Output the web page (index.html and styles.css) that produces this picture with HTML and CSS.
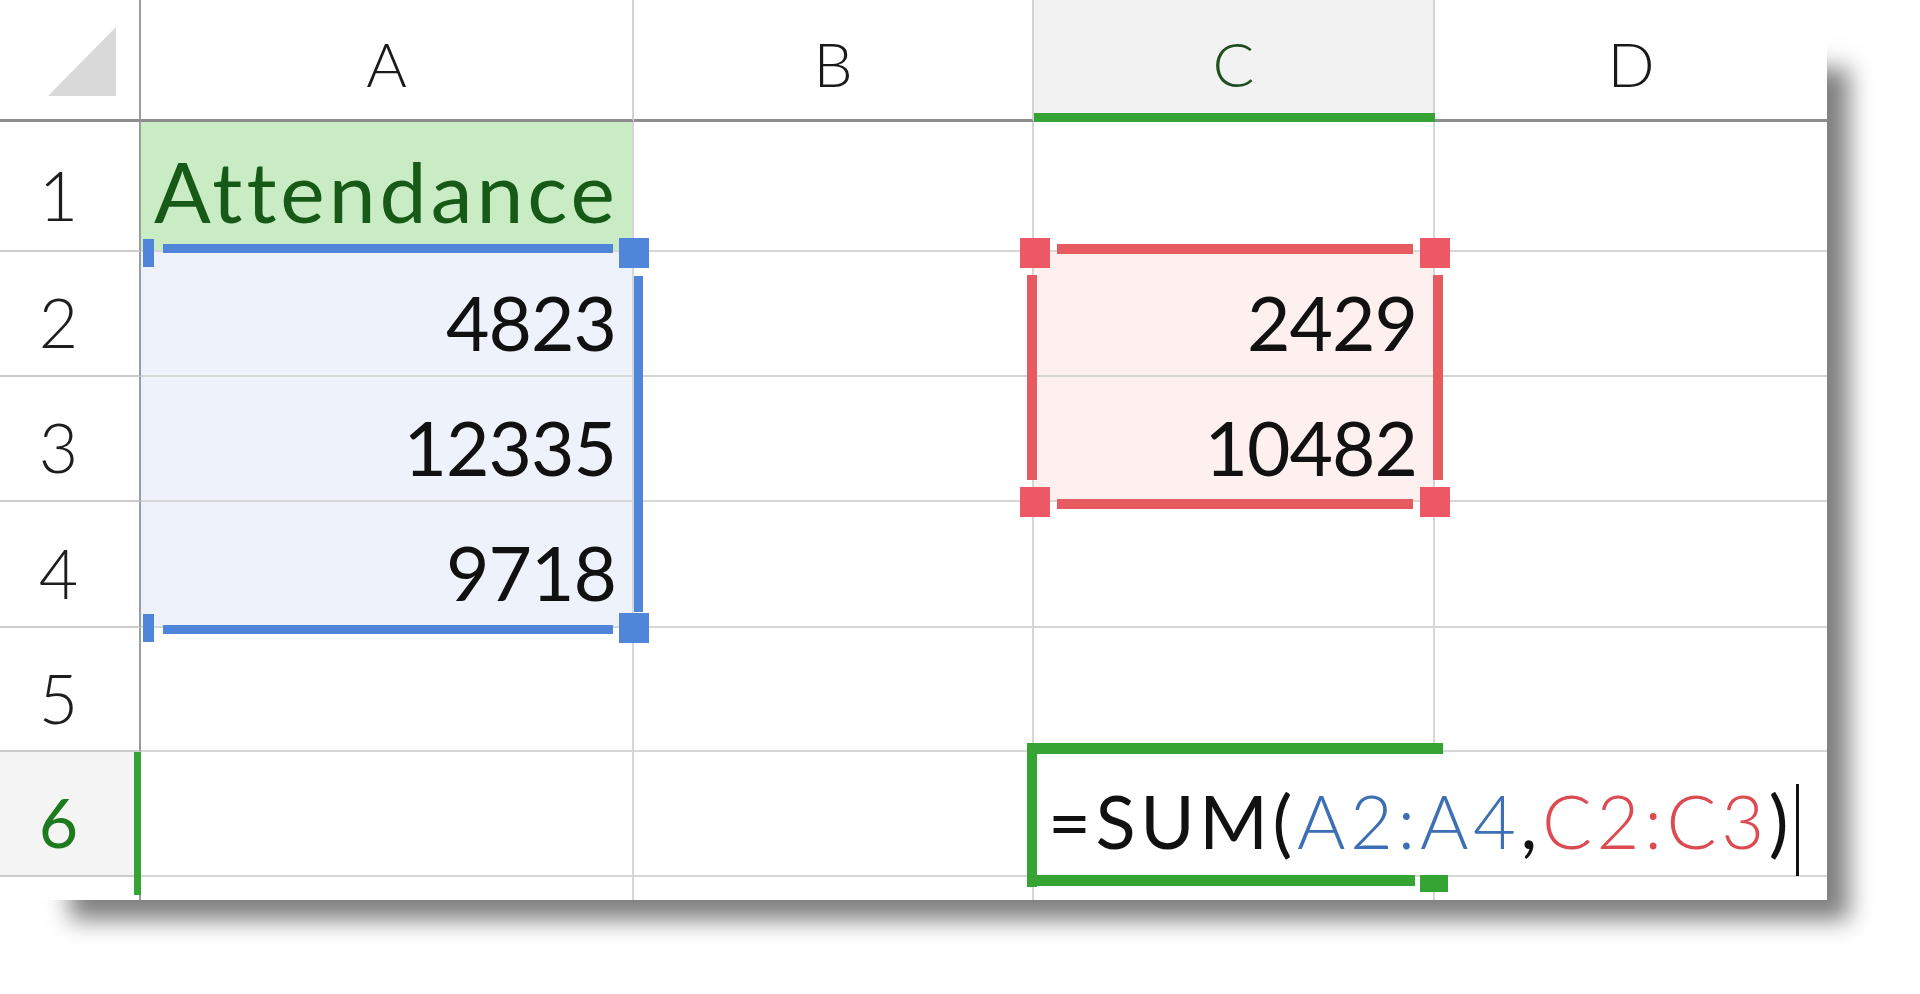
FILE: index.html
```html
<!DOCTYPE html>
<html lang="en">
<head>
<meta charset="utf-8">
<title>SUM formula</title>
<link rel="stylesheet" href="styles.css">
</head>
<body>
<div class="page">
  <div class="sheet">
    <div class="grid">
      <div class="corner">
        <svg class="corner-tri" width="68" height="69" viewBox="0 0 68 69"><polygon points="68,0 68,69 0,69" fill="#d9d9d9"/></svg>
      </div>
      <div class="colhead">A</div>
      <div class="colhead">B</div>
      <div class="colhead active">C</div>
      <div class="colhead last">D</div>

      <div class="rowhead">1</div>
      <div class="cell title">Attendance</div>
      <div class="cell"></div>
      <div class="cell"></div>
      <div class="cell last"></div>

      <div class="rowhead">2</div>
      <div class="cell num blue">4823</div>
      <div class="cell"></div>
      <div class="cell num red">2429</div>
      <div class="cell last"></div>

      <div class="rowhead">3</div>
      <div class="cell num blue">12335</div>
      <div class="cell"></div>
      <div class="cell num red">10482</div>
      <div class="cell last"></div>

      <div class="rowhead">4</div>
      <div class="cell num blue">9718</div>
      <div class="cell"></div>
      <div class="cell"></div>
      <div class="cell last"></div>

      <div class="rowhead">5</div>
      <div class="cell"></div>
      <div class="cell"></div>
      <div class="cell"></div>
      <div class="cell last"></div>

      <div class="rowhead active-row">6</div>
      <div class="cell"></div>
      <div class="cell"></div>
      <div class="cell edit"><span class="f-black">=SUM(</span><span class="f-blue">A2:A4</span><span class="f-black">,</span><span class="f-red">C2:C3</span><span class="f-black">)</span></div>

      <div class="rowhead tail"></div>
      <div class="cell tail"></div>
      <div class="cell tail"></div>
      <div class="cell tail"></div>
      <div class="cell tail last"></div>
    </div>

    <!-- blue range A2:A4 -->
    <div class="mk blue-bar b-top"></div>
    <div class="mk blue-bar b-bottom"></div>
    <div class="mk blue-bar b-right"></div>
    <div class="mk blue-sq b-sq-tr"></div>
    <div class="mk blue-sq b-sq-br"></div>
    <div class="mk blue-sq b-sq-tl"></div>
    <div class="mk blue-sq b-sq-bl"></div>

    <!-- red range C2:C3 -->
    <div class="mk red-bar r-top"></div>
    <div class="mk red-bar r-bottom"></div>
    <div class="mk red-bar r-left"></div>
    <div class="mk red-bar r-right"></div>
    <div class="mk red-sq r-sq-tl"></div>
    <div class="mk red-sq r-sq-tr"></div>
    <div class="mk red-sq r-sq-bl"></div>
    <div class="mk red-sq r-sq-br"></div>

    <!-- active cell C6 -->
    <div class="mk green g-colhead"></div>
    <div class="mk green g-rowhead"></div>
    <div class="mk green g-top"></div>
    <div class="mk green g-left"></div>
    <div class="mk green g-bottom"></div>
    <div class="mk green g-handle"></div>
    <div class="mk caret"></div>
  </div>
</div>
</body>
</html>
```

FILE: styles.css
```css
* {
  box-sizing: border-box;
  margin: 0;
  padding: 0;
}

html,
body {
  background: #ffffff;
}

body {
  margin: 0;
  font-family: Lato, "Open Sans", "Liberation Sans", sans-serif;
  overflow: hidden;
}

.page {
  width: 1920px;
  height: 994px;
}

.sheet {
  position: relative;
  width: 1827px;
  height: 900px;
  background: #ffffff;
  box-shadow: 46px 44px 22px -24px rgba(0, 0, 0, 0.5);
}

.grid {
  display: grid;
  grid-template-columns: 141px 493px 400px 401px 392px;
  grid-template-rows: 122px 130px 125px 125px 126px 124px 125px 23px;
  height: 100%;
}

.corner {
  display: flex;
  align-items: flex-end;
  justify-content: flex-end;
  padding: 0 23px 23px 0;
  border-right: 2px solid #9c9c9c;
  border-bottom: 3px solid #8e8e8e;
}

.colhead {
  display: flex;
  align-items: center;
  justify-content: center;
  padding-top: 6px;
  font-size: 62px;
  font-weight: 300;
  color: #1a1a1a;
  border-right: 2px solid #d2d2d2;
  border-bottom: 3px solid #8e8e8e;
}

.colhead.active {
  background: #f2f2f2;
  color: #1f4f1f;
}

.colhead.last,
.cell.last {
  border-right: none;
}

.rowhead {
  display: flex;
  align-items: center;
  justify-content: center;
  padding: 16px 22px 0 0;
  font-size: 68px;
  font-weight: 300;
  color: #1e1e1e;
  border-right: 2px solid #9c9c9c;
  border-bottom: 2px solid #cccccc;
}

.rowhead.active-row {
  background: #f4f4f4;
  color: #1e7a1e;
  font-weight: 400;
}

.rowhead.tail,
.cell.tail {
  border-bottom: none;
}

.cell {
  display: flex;
  align-items: center;
  border-right: 2px solid #d6d6d6;
  border-bottom: 2px solid #d6d6d6;
  white-space: nowrap;
  color: #111111;
}

.title {
  padding: 8px 0 0 13px;
  font-size: 84px;
  letter-spacing: 4px;
  color: #175a17;
  background: #c9ecc4;
}

.num {
  justify-content: flex-end;
  padding: 16px 16px 0 0;
  font-size: 75px;
  font-weight: 400;
  letter-spacing: -1px;
}

.num.blue {
  background: #eef3fb;
}

.num.red {
  background: #fdf0ef;
}

.edit {
  grid-column: span 2;
  border-right: none;
  padding: 14px 0 0 14px;
  font-size: 74px;
  letter-spacing: 4.6px;
}

.f-black {
  color: #111111;
}

.f-blue {
  color: #3d6fb4;
  font-weight: 300;
}

.f-red {
  color: #dc4a52;
  font-weight: 300;
}

/* overlay marks for range highlights */
.mk {
  position: absolute;
}

.blue-bar,
.blue-sq {
  background: #4f86da;
}

.red-bar {
  background: #e65a60;
}

.red-sq {
  background: #ec5866;
}

.green {
  background: #35a435;
}

.b-top {
  left: 163px;
  top: 244px;
  width: 450px;
  height: 9px;
}

.b-bottom {
  left: 163px;
  top: 625px;
  width: 450px;
  height: 9px;
}

.b-right {
  left: 634px;
  top: 276px;
  width: 9px;
  height: 336px;
}

.b-sq-tr {
  left: 619px;
  top: 238px;
  width: 30px;
  height: 30px;
}

.b-sq-br {
  left: 619px;
  top: 613px;
  width: 30px;
  height: 30px;
}

.b-sq-tl {
  left: 143px;
  top: 239px;
  width: 11px;
  height: 28px;
}

.b-sq-bl {
  left: 143px;
  top: 614px;
  width: 11px;
  height: 28px;
}

.r-top {
  left: 1057px;
  top: 244px;
  width: 356px;
  height: 10px;
}

.r-bottom {
  left: 1057px;
  top: 499px;
  width: 356px;
  height: 10px;
}

.r-left {
  left: 1027px;
  top: 275px;
  width: 10px;
  height: 205px;
}

.r-right {
  left: 1433px;
  top: 275px;
  width: 10px;
  height: 205px;
}

.r-sq-tl {
  left: 1020px;
  top: 238px;
  width: 30px;
  height: 30px;
}

.r-sq-tr {
  left: 1420px;
  top: 238px;
  width: 30px;
  height: 30px;
}

.r-sq-bl {
  left: 1020px;
  top: 487px;
  width: 30px;
  height: 30px;
}

.r-sq-br {
  left: 1420px;
  top: 487px;
  width: 30px;
  height: 30px;
}

.g-colhead {
  left: 1034px;
  top: 113px;
  width: 401px;
  height: 9px;
}

.g-rowhead {
  left: 134px;
  top: 752px;
  width: 7px;
  height: 143px;
}

.g-top {
  left: 1027px;
  top: 743px;
  width: 416px;
  height: 11px;
}

.g-left {
  left: 1027px;
  top: 743px;
  width: 10px;
  height: 144px;
}

.g-bottom {
  left: 1027px;
  top: 875px;
  width: 388px;
  height: 11px;
}

.g-handle {
  left: 1420px;
  top: 875px;
  width: 28px;
  height: 17px;
}

.caret {
  left: 1796px;
  top: 784px;
  width: 3px;
  height: 92px;
  background: #111111;
}
```
